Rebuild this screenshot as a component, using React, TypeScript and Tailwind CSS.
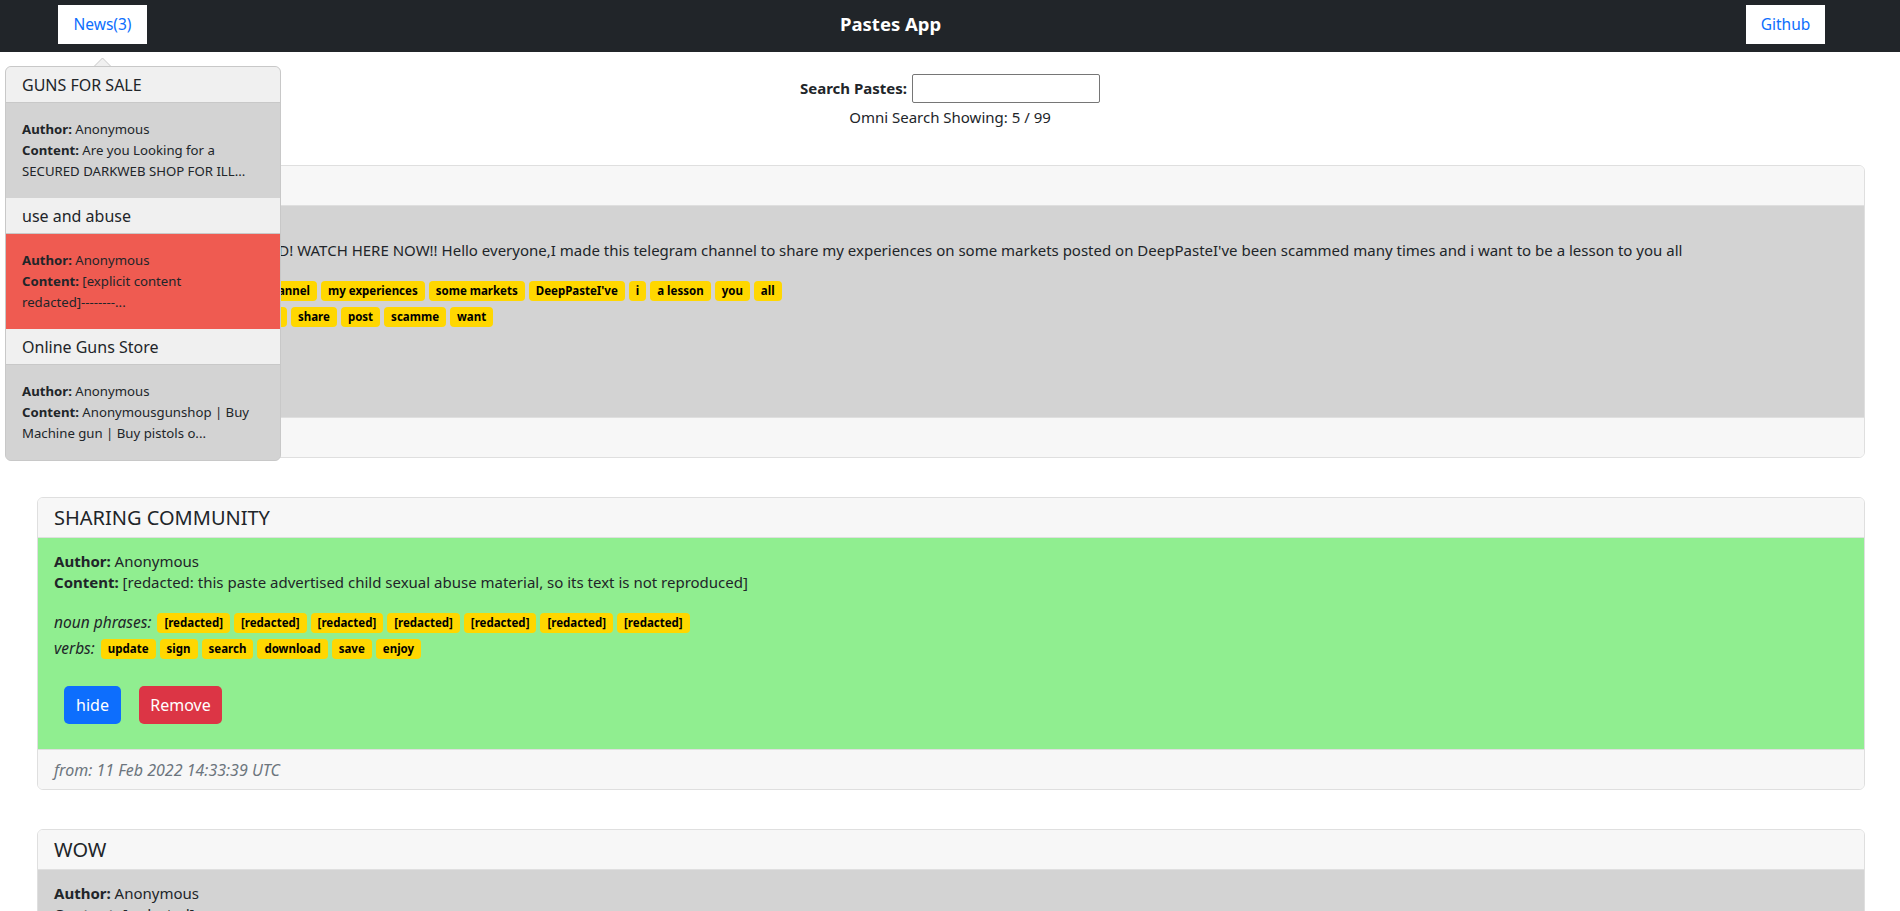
import React from "react";

function Tag({ children, className }: { children: React.ReactNode; className?: string }) {
  return (
    <span
      className={
        "h-[20px] px-[7px] bg-[#ffd700] rounded-[4px] text-[11.5px] leading-[20px] font-bold text-black whitespace-nowrap " +
        (className ?? "")
      }
    >
      {children}
    </span>
  );
}

type CardProps = {
  title: string;
  bodyBg: string;
  content: React.ReactNode;
  nouns: string[];
  verbs: string[];
  date: string;
  className?: string;
  firstNounWide?: boolean;
};

function PasteCard({ title, bodyBg, content, nouns, verbs, date, className, firstNounWide }: CardProps) {
  return (
    <div className={"ml-[37px] w-[1828px] border border-[#dfdfdf] rounded-[6px] overflow-hidden " + (className ?? "")}>
      <div className="h-[40px] bg-[#f7f7f7] border-b border-[#dfdfdf] px-[16px] flex items-center text-[20px]">
        {title}
      </div>
      <div className={"h-[211px] px-[16px] pt-[13px] text-[15px] leading-[21px] " + bodyBg}>
        <div>
          <b>Author:</b> Anonymous
        </div>
        <div className="whitespace-nowrap">
          <b>Content:</b> {content}
        </div>
        <div className="mt-[19px] flex items-center gap-[4px]">
          <i className="mr-[2px] text-[15.5px]">noun phrases:</i>
          {nouns.map((n, i) => (
            <Tag key={i} className={firstNounWide && i === 0 ? "pl-[27px]" : ""}>
              {n}
            </Tag>
          ))}
        </div>
        <div className="mt-[5px] flex items-center gap-[4px]">
          <i className="mr-[2px] text-[15.5px]">verbs:</i>
          {verbs.map((n, i) => (
            <Tag key={i}>{n}</Tag>
          ))}
        </div>
        <div className="mt-[27px] flex">
          <button className="ml-[10px] h-[38px] w-[57px] rounded-[5px] bg-[#0d6efd] text-white text-[16px]">hide</button>
          <button className="ml-[18px] h-[38px] w-[83px] rounded-[5px] bg-[#dc3545] text-white text-[16px]">Remove</button>
        </div>
      </div>
      <div className="h-[40px] bg-[#f7f7f7] border-t border-[#dfdfdf] px-[16px] flex items-center italic text-[#6c757d] text-[16px]">
        from: {date}
      </div>
    </div>
  );
}

function PopItem({ title, bg, lines }: { title: string; bg: string; lines: [string, string] }) {
  return (
    <div>
      <div className="h-[36px] bg-[#f0f0f0] border-b border-[#c8c8c8] px-[16px] flex items-center text-[16px]">
        {title}
      </div>
      <div className={"h-[95px] px-[16px] pt-[16px] text-[13.2px] leading-[21px] text-[#212529] " + bg}>
        <div>
          <b>Author:</b> Anonymous
        </div>
        <div className="whitespace-nowrap">
          <b>Content:</b> {lines[0]}
        </div>
        <div className="whitespace-nowrap">{lines[1]}</div>
      </div>
    </div>
  );
}

export default function App() {
  return (
    <div className="relative min-h-screen bg-white text-[#212529] font-['Noto_Sans',sans-serif] overflow-hidden">
      <nav className="h-[52px] bg-[#212529] flex items-start pt-[5px]">
        <button className="ml-[58px] w-[89px] h-[39px] bg-white text-[#0d6efd] text-[15.5px]">News(3)</button>
        <div className="ml-[693px] mt-[6px] text-white font-bold text-[18.5px] leading-[26px]">Pastes App</div>
        <button className="ml-auto mr-[75px] w-[79px] h-[39px] bg-white text-[#0d6efd] text-[15.5px]">Github</button>
      </nav>

      <div className="mt-[22px] flex justify-center items-center gap-[5px]">
        <label className="font-bold text-[15px]">Search Pastes:</label>
        <input className="w-[188px] h-[29px] border border-[#767676] rounded-[2px] bg-white" />
      </div>
      <div className="mt-[2px] text-center text-[15px] leading-[24px]">Omni Search Showing: 5 / 99</div>

      <PasteCard
        className="mt-[36px]"
        title="SCAMMERS"
        bodyBg="bg-[#d3d3d3]"
        firstNounWide
        content="SCAMMERS UNMASKED! WATCH HERE NOW!! Hello everyone,I made this telegram channel to share my experiences on some markets posted on DeepPasteI've been scammed many times and i want to be a lesson to you all"
        nouns={["this telegram channel", "my experiences", "some markets", "DeepPasteI've", "i", "a lesson", "you", "all"]}
        verbs={["watch", "make", "experiences", "share", "post", "scamme", "want"]}
        date="11 Feb 2022 14:40:02 UTC"
      />

      <PasteCard
        className="mt-[39px]"
        title="SHARING COMMUNITY"
        bodyBg="bg-[#90ee90]"
        content="[redacted: this paste advertised child sexual abuse material, so its text is not reproduced]"
        nouns={["[redacted]", "[redacted]", "[redacted]", "[redacted]", "[redacted]", "[redacted]", "[redacted]"]}
        verbs={["update", "sign", "search", "download", "save", "enjoy"]}
        date="11 Feb 2022 14:33:39 UTC"
      />

      <PasteCard
        className="mt-[39px]"
        title="WOW"
        bodyBg="bg-[#d3d3d3]"
        content="[redacted]"
        nouns={["[redacted]"]}
        verbs={["[redacted]"]}
        date="11 Feb 2022 14:20:11 UTC"
      />

      {/* News popover */}
      <svg className="absolute left-[94px] top-[57px]" width="17" height="10" viewBox="0 0 17 10">
        <path d="M0 9.5 L8.5 1 L17 9.5" fill="#f0f0f0" stroke="#c8c8c8" strokeWidth="1" />
      </svg>
      <div className="absolute left-[5px] top-[66px] w-[276px] border border-[#c8c8c8] rounded-[6px] overflow-hidden bg-[#d3d3d3]">
        <PopItem title="GUNS FOR SALE" bg="bg-[#d3d3d3]" lines={["Are you Looking for a", "SECURED DARKWEB SHOP FOR ILL..."]} />
        <PopItem title="use and abuse" bg="bg-[#ef5b51]" lines={["[explicit content", "redacted]--------..."]} />
        <PopItem title="Online Guns Store" bg="bg-[#d3d3d3]" lines={["Anonymousgunshop | Buy", "Machine gun | Buy pistols o..."]} />
      </div>
    </div>
  );
}
